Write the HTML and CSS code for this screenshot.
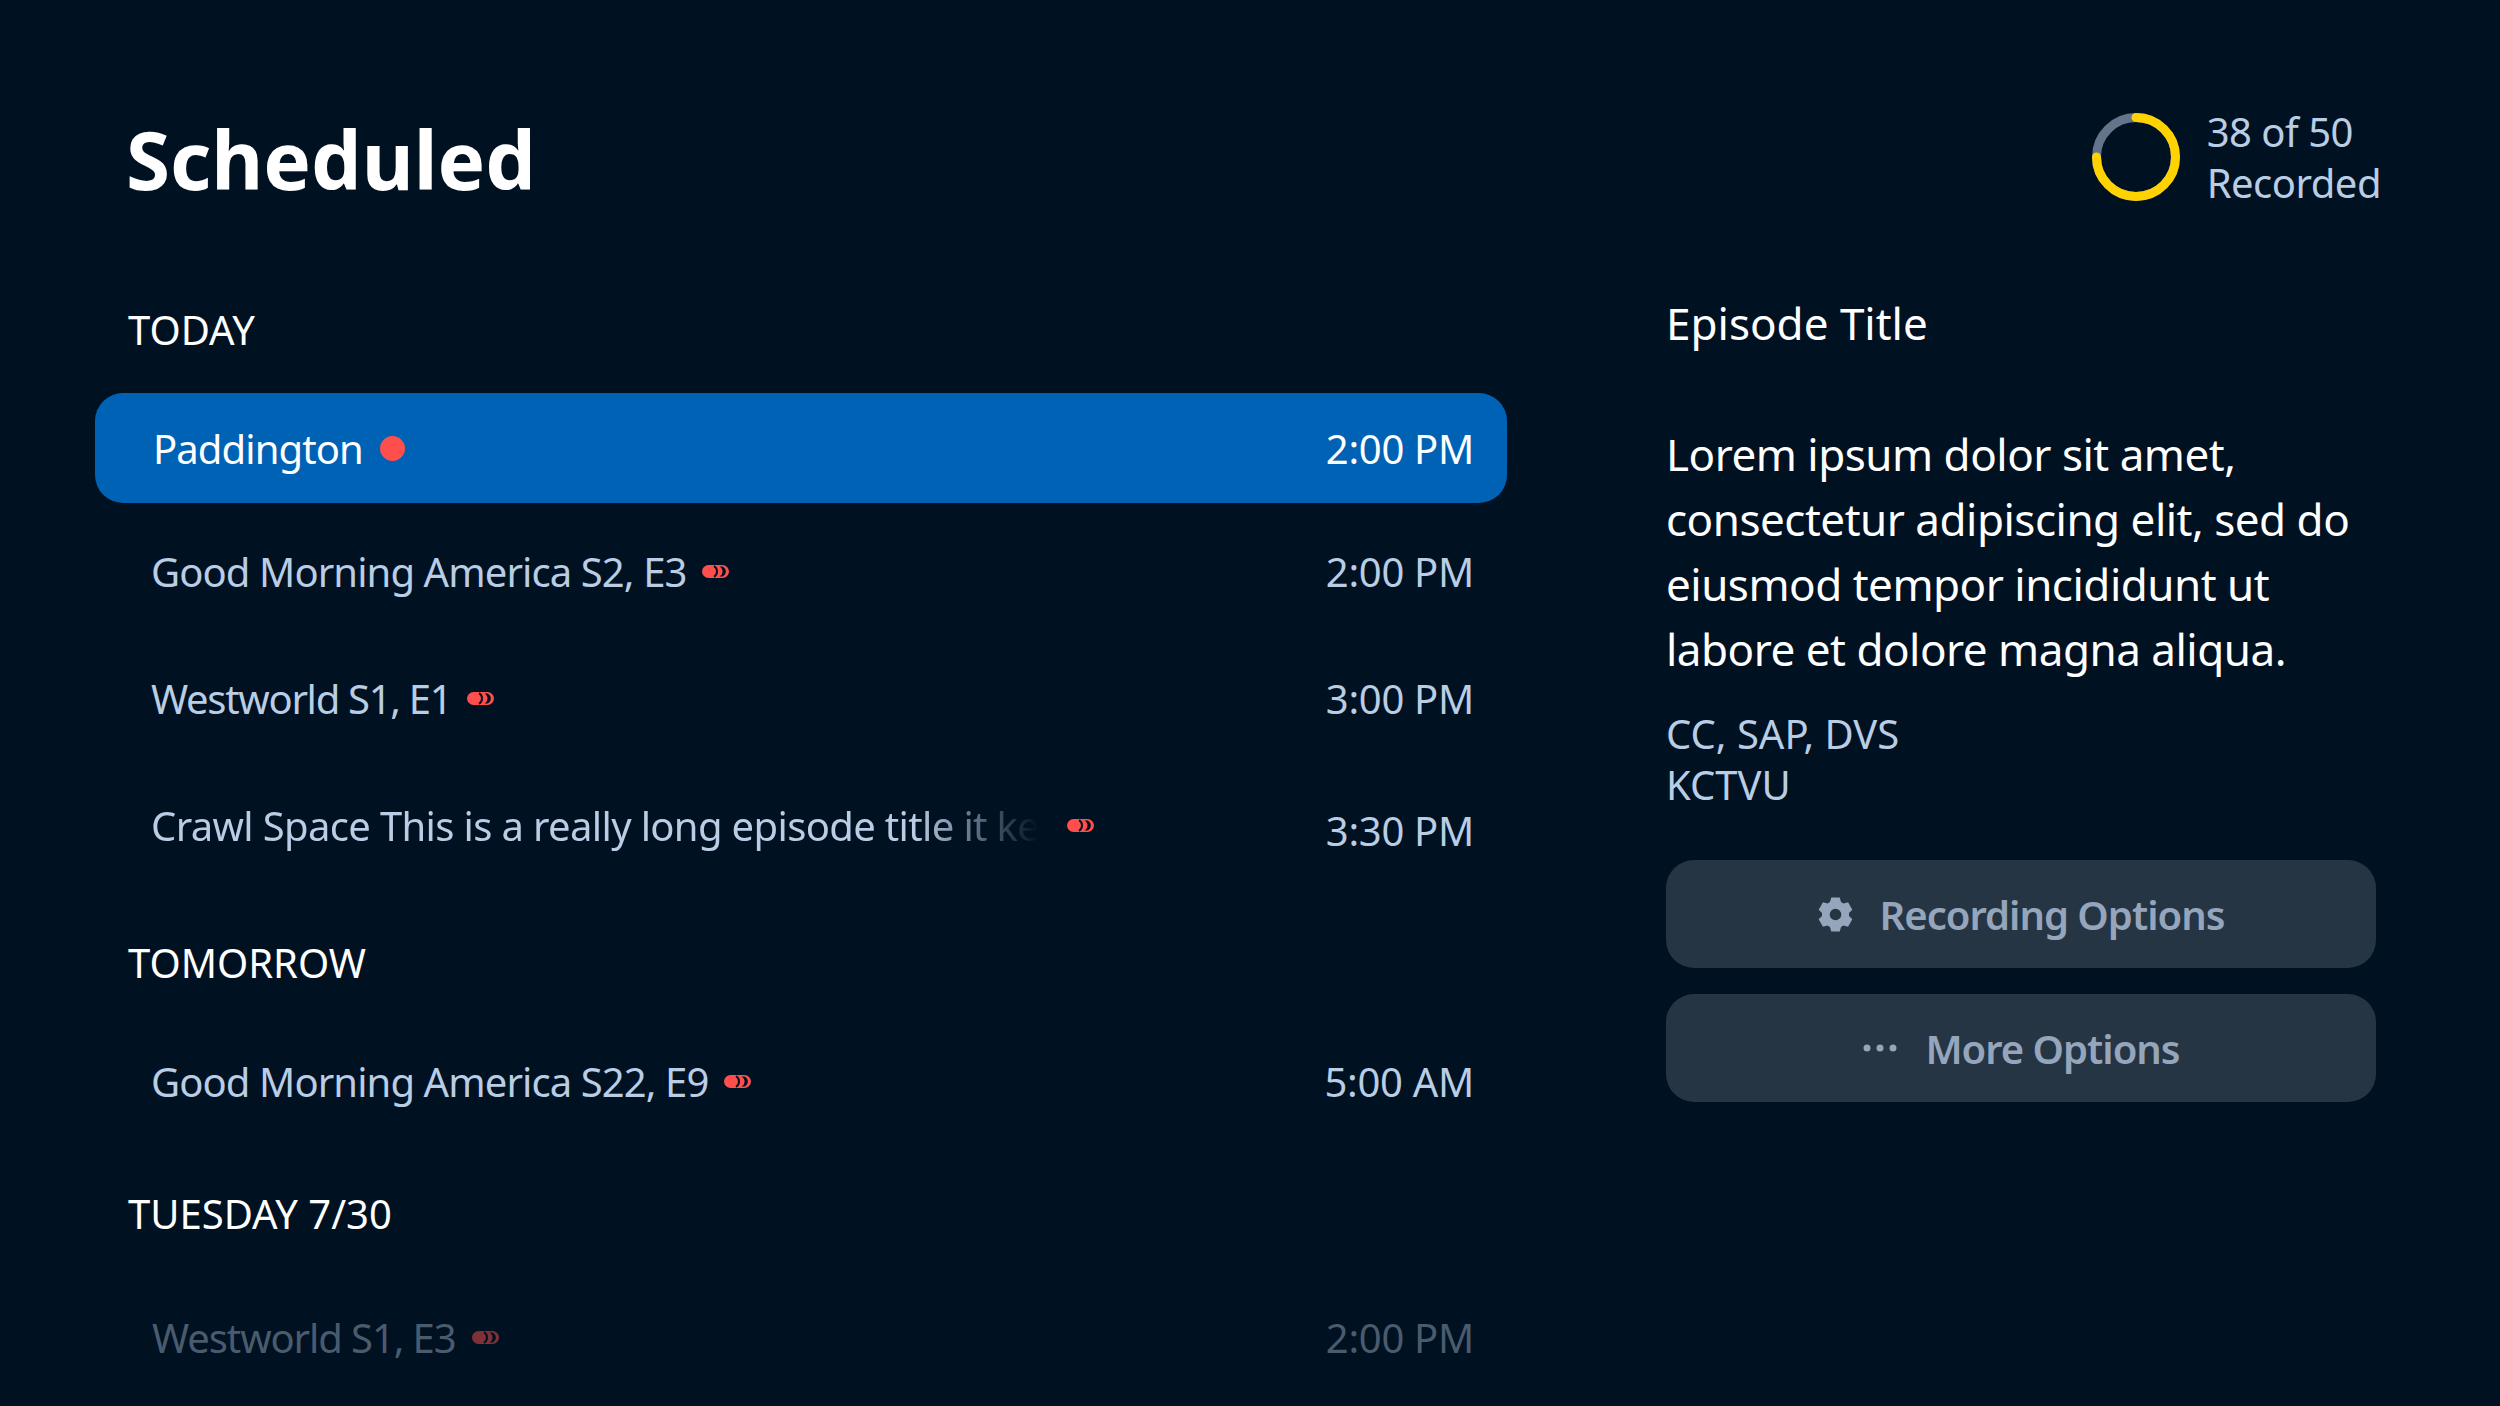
FILE: index.html
```html
<!DOCTYPE html>
<html lang="en">
<head>
<meta charset="utf-8">
<title>Scheduled</title>
<link rel="stylesheet" href="styles.css">
</head>
<body>
<svg class="defs" width="0" height="0" aria-hidden="true">
  <symbol id="rec" viewBox="0 0 27 13">
    <rect width="27" height="13" rx="6.500" fill="#ff4f4c"/>
    <path d="M12 1.200C16 3.500 16 9.500 12 11.800" fill="none" stroke="#001122" stroke-width="2"/>
    <path d="M17.500 1.500C21.500 3.500 21.500 9.500 17.500 11.500H20.500C25 9.500 25 3.500 20.500 1.500z" fill="#001122"/>
  </symbol>
</svg>
<main class="screen">
  <header class="top">
    <h1 class="title">Scheduled</h1>
    <div class="quota">
      <svg class="ring" width="88" height="88" viewBox="0 0 88 88">
        <circle cx="44" cy="44" r="39.500" fill="none" stroke="#64748a" stroke-width="9"/>
        <path d="M44 4.500A39.500 39.500 0 1 1 4.500 44" fill="none" stroke="#ffd200" stroke-width="9" stroke-linecap="round"/>
      </svg>
      <div class="quota-text">38 of 50<br>Recorded</div>
    </div>
  </header>
  <div class="content">
    <section class="list">
      <h2 class="day day-first">TODAY</h2>
      <div class="row row-selected">
        <span class="name">Paddington</span><span class="dot"></span>
        <span class="time">2:00 PM</span>
      </div>
      <div class="row">
        <span class="name">Good Morning America S2, E3</span><svg class="rec"><use href="#rec"/></svg>
        <span class="time">2:00 PM</span>
      </div>
      <div class="row">
        <span class="name name-tight">Westworld S1, E1</span><svg class="rec"><use href="#rec"/></svg>
        <span class="time">3:00 PM</span>
      </div>
      <div class="row">
        <span class="name name-fade">Crawl Space This is a really long episode title it ke</span><svg class="rec rec-fade"><use href="#rec"/></svg>
        <span class="time time-low">3:30 PM</span>
      </div>
      <h2 class="day day-tomorrow">TOMORROW</h2>
      <div class="row">
        <span class="name">Good Morning America S22, E9</span><svg class="rec"><use href="#rec"/></svg>
        <span class="time">5:00 AM</span>
      </div>
      <h2 class="day day-tuesday">TUESDAY 7/30</h2>
      <div class="row row-dim">
        <span class="name">Westworld S1, E3</span><svg class="rec"><use href="#rec"/></svg>
        <span class="time">2:00 PM</span>
      </div>
    </section>
    <aside class="detail">
      <div class="ep-title">Episode Title</div>
      <p class="desc">Lorem ipsum dolor sit amet, consectetur adipiscing elit, sed do eiusmod tempor incididunt ut labore et dolore magna aliqua.</p>
      <div class="meta">CC, SAP, DVS<br>KCTVU</div>
      <div class="btn btn-first">
        <svg class="gear" width="35" height="35" viewBox="0 0 24 24"><path fill="#95a5bb" fill-rule="evenodd" d="M15.780 3.500L14.900 .36H9.100L8.220 3.500 6.530 4.480 3.370 3.660 .46 8.690 2.750 11.030V12.970L.46 15.310 3.370 20.340 6.530 19.520 8.220 20.500 9.100 23.640H14.900L15.780 20.500 17.470 19.520 20.630 20.340 23.540 15.310 21.250 12.970V11.030L23.540 8.690 20.630 3.660 17.470 4.480zM12 8a4 4 0 1 0 0 8 4 4 0 0 0 0-8z"/></svg>
        <span>Recording Options</span>
      </div>
      <div class="btn">
        <svg class="dots" width="36" height="12" viewBox="0 0 36 12"><circle cx="5" cy="6" r="3.500" fill="#95a5bb"/><circle cx="18" cy="6" r="3.500" fill="#95a5bb"/><circle cx="31" cy="6" r="3.500" fill="#95a5bb"/></svg>
        <span>More Options</span>
      </div>
    </aside>
  </div>
</main>
</body>
</html>
```
FILE: styles.css
```css
* { box-sizing: border-box; }
html, body { margin: 0; height: 100%; }
body {
  background: #001122;
  font-family: "Noto Sans", "Open Sans", sans-serif;
  overflow: hidden;
}
.defs { position: absolute; }
.screen { width: 2500px; height: 1406px; overflow: hidden; }
.top {
  display: flex;
  justify-content: space-between;
  align-items: flex-start;
  padding: 104px 119px 0 126px;
  height: 290px;
}
.title {
  margin: 0;
  font-size: 80px;
  line-height: 110px;
  font-weight: 700;
  color: #fff;
}
.quota { display: flex; align-items: center; gap: 27px; margin-top: 2px; }
.ring { display: block; }
.quota-text { font-size: 40px; line-height: 51px; letter-spacing: -0.5px; color: #b9cde4; }
.content { display: flex; padding-left: 95px; }
.list { width: 1412px; flex: none; }
.day {
  margin: 0;
  padding-left: 33px;
  font-size: 40px;
  line-height: 52px;
  font-weight: 400;
  color: #fff;
}
.day-first { margin-top: 14px; margin-bottom: 37px; }
.day-tomorrow { margin-top: 38px; height: 91px; padding-top: 10px; }
.day-tuesday { height: 129px; padding-top: 43px; }
.row {
  display: flex;
  align-items: center;
  height: 127px;
  padding: 0 33px 0 56px;
  font-size: 40px;
  letter-spacing: -0.9px;
  color: #b9cde4;
}
.row-selected {
  height: 110px;
  margin-bottom: 5px;
  padding-left: 58px;
  background: #0062b4;
  border-radius: 28px;
  color: #fff;
}
.row-dim { padding-left: 57px; letter-spacing: -1.100px; color: #4a5b6e; }
.row-dim .rec { opacity: .5; }
.name { white-space: nowrap; }
.name-tight { letter-spacing: -1.300px; }
.name-fade {
  letter-spacing: -0.650px;
  -webkit-mask-image: linear-gradient(to right, #000 86%, transparent 100%);
  mask-image: linear-gradient(to right, #000 86%, transparent 100%);
}
.dot {
  width: 25px;
  height: 25px;
  margin-left: 17px;
  border-radius: 50%;
  background: #ff4f4c;
}
.rec { width: 27px; height: 13px; margin-left: 16px; flex: none; }
.rec-fade { margin-left: 28px; }
.time { margin-left: auto; white-space: nowrap; letter-spacing: -0.3px; }
.time-low { position: relative; top: 5px; }
.detail { width: 710px; margin-left: 159px; flex: none; color: #fff; }
.ep-title { font-size: 44px; line-height: 56px; margin-top: 5px; }
.desc { margin: 71px 0 0; font-size: 44px; line-height: 65px; letter-spacing: -0.5px; }
.meta { margin-top: 26px; font-size: 40px; line-height: 51px; color: #b9cde4; }
.btn {
  display: flex;
  align-items: center;
  justify-content: center;
  gap: 27px;
  height: 108px;
  margin-top: 26px;
  border-radius: 28px;
  background: #263543;
  font-size: 40px;
  font-weight: 600;
  letter-spacing: -1px;
  color: #95a5bb;
}
.btn-first { margin-top: 50px; }
```
